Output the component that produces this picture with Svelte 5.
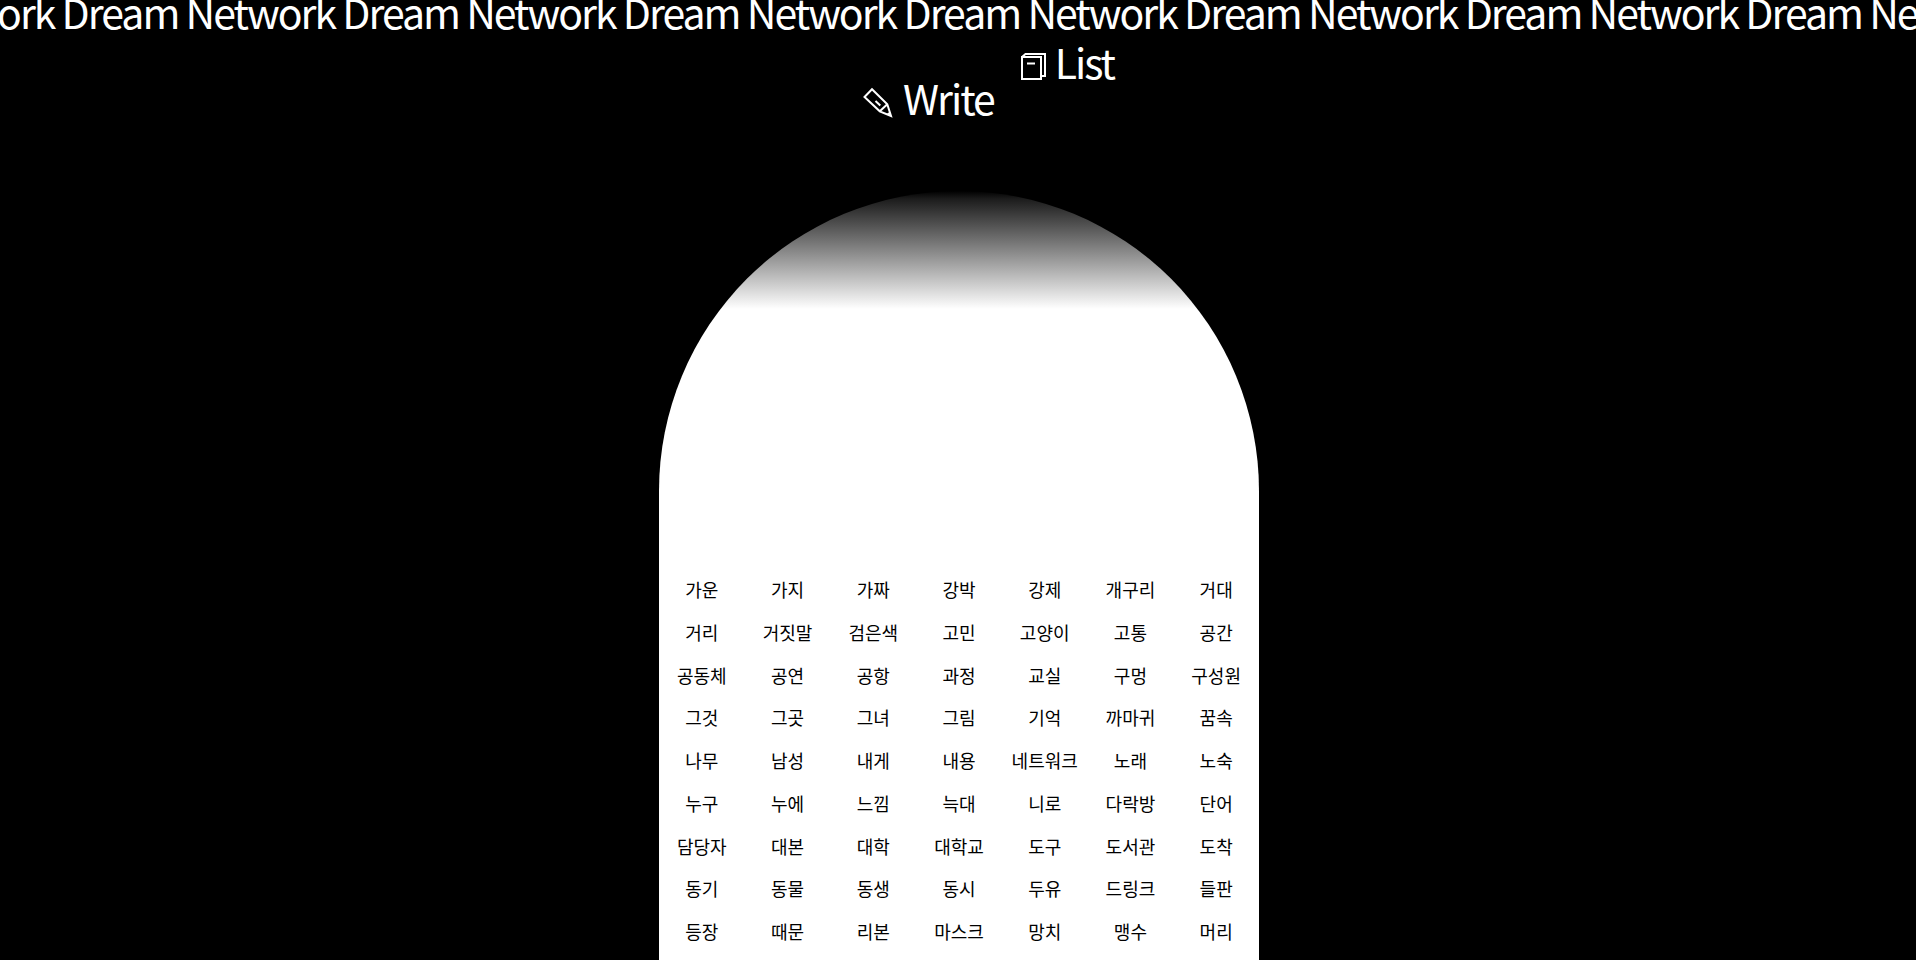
<script>
  const title = 'Dream Network ';
  const words = `가운 가지 가짜 강박 강제 개구리 거대
    거리 거짓말 검은색 고민 고양이 고통 공간
    공동체 공연 공항 과정 교실 구멍 구성원
    그것 그곳 그녀 그림 기억 까마귀 꿈속
    나무 남성 내게 내용 네트워크 노래 노숙
    누구 누에 느낌 늑대 니로 다락방 단어
    담당자 대본 대학 대학교 도구 도서관 도착
    동기 동물 동생 동시 두유 드링크 들판
    등장 때문 리본 마스크 망치 맹수 머리`.split(/\s+/);
</script>

<div class="page">
  <h1 class="banner">{title.repeat(10)}</h1>
  <nav>
    <a class="write" href="#write">
      <svg width="32" height="32" viewBox="0 0 32 32" aria-hidden="true">
        <path d="M2.5 11 10 3.2 25.3 18.3 29 30 17.8 25.3ZM17.8 25.3 25.3 18.3M13.5 15 18.3 19.5" />
        <path class="tip" d="M28 25.5 29 30 24.5 28.3Z" />
      </svg>
      Write
    </a>
    <a class="list" href="#list">
      <svg width="26" height="30" viewBox="0 0 26 30" aria-hidden="true">
        <path d="M2 7H21V29H2ZM2 7 5.5 4H25V26H21M7 13.5H15" />
      </svg>
      List
    </a>
  </nav>
  <main>
    <div class="words">
      {#each words as word}
        <a href={`#${word}`}>{word}</a>
      {/each}
    </div>
  </main>
</div>

<style>
  :global(body) {
    background: #000;
  }
  .page {
    min-height: 100vh;
    display: flex;
    flex-direction: column;
    overflow: hidden;
    box-sizing: border-box;
    padding-left: 2px;
    color: #fff;
    font-family: 'Noto Sans CJK KR', sans-serif;
  }
  a {
    color: inherit;
    text-decoration: none;
  }
  .banner {
    margin: 0 0 0 -221px;
    height: 28px;
    line-height: 22px;
    font-size: 41px;
    font-weight: 400;
    letter-spacing: -2px;
    white-space: nowrap;
  }
  nav {
    display: flex;
    justify-content: center;
    gap: 26px;
    padding: 16px 0 0 58px;
    height: 163px;
    font-size: 41px;
    line-height: 34px;
    letter-spacing: -2px;
    box-sizing: border-box;
  }
  nav a {
    display: flex;
    gap: 9px;
    height: 40px;
  }
  .write {
    margin-top: 36px;
  }
  svg {
    fill: none;
    stroke: #fff;
    stroke-width: 2;
    margin-top: 6px;
  }
  .tip {
    fill: #fff;
    stroke: none;
  }
  main {
    flex: 1 0 auto;
    align-self: center;
    width: 600px;
    padding: 377px 0 0;
    box-sizing: border-box;
    border-radius: 300px 300px 0 0;
    background: linear-gradient(#000, #1c1c1c 8px, #fff 118px);
    color: #000;
  }
  .words {
    display: grid;
    grid-template-columns: repeat(7, 1fr);
    grid-auto-rows: 1fr;
    height: 385px;
    font-size: 18px;
    line-height: 42px;
    text-align: center;
  }
</style>
